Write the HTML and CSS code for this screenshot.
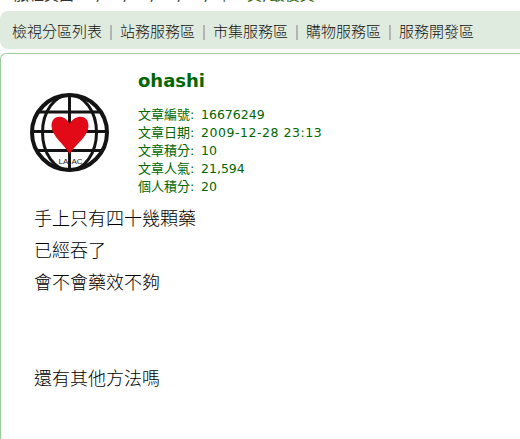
FILE: index.html
```
<!DOCTYPE html>
<html lang="zh-Hant">
<head>
    <meta charset="UTF-8">
    <title>ohashi</title>
    <link rel="stylesheet" href="styles.css">
</head>
<body>
    <div class="pager">
        <span class="pager-label">旅程頁面:</span>
        <span class="pager-pages"><span>1,</span><span>2,</span><span>3,</span><span>4,</span><span>5,</span></span>
        <a class="pager-next">下一頁</a>,
        <a class="pager-last">最後頁</a>
    </div>

    <nav class="sections">
        <a>檢視分區列表</a>
        <a>站務服務區</a>
        <a>市集服務區</a>
        <a>購物服務區</a>
        <a>服務開發區</a>
    </nav>

    <article class="post">
        <header class="post-header">
            <svg class="avatar" viewBox="0 0 80 80" width="80" height="80">
                <g fill="none" stroke="#141414" stroke-width="3">
                    <circle cx="39.500" cy="39.500" r="37.500" stroke-width="4"/>
                    <ellipse cx="39.500" cy="39.500" rx="27" ry="37.500"/>
                    <path d="M39.500 2v76M9 19h61M2 38.500h75M8 57.500h63"/>
                </g>
                <path class="heart" d="M39.500 61C35 52 21.500 43 21.500 33C21.500 21 35 21 39.500 31C45 21 58.500 21 58.500 33C58.500 43 45 52 39.500 61Z"/>
                <text class="avatar-text" x="28.500" y="71">LA</text>
                <text class="avatar-text" x="41.500" y="71">AC</text>
            </svg>
            <div class="post-info">
                <h1>ohashi</h1>
                <dl>
                    <div><dt>文章編號:</dt><dd>16676249</dd></div>
                    <div><dt>文章日期:</dt><dd class="date">2009-12-28 23:13</dd></div>
                    <div><dt>文章積分:</dt><dd>10</dd></div>
                    <div><dt>文章人氣:</dt><dd>21,594</dd></div>
                    <div><dt>個人積分:</dt><dd>20</dd></div>
                </dl>
            </div>
        </header>
        <div class="post-body">
            手上只有四十幾顆藥<br>
            已經吞了<br>
            會不會藥效不夠<br>
            <br>
            <br>
            還有其他方法嗎
        </div>
    </article>
</body>
</html>
```

FILE: styles.css
```
* {
    box-sizing: border-box;
}
body {
    margin: 0;
    height: 439px;
    overflow: hidden;
    background: #fff;
    color: #333;
    font-family: "DejaVu Sans", "Noto Sans CJK TC", sans-serif;
    font-weight: 400;
}
.pager {
    display: flex;
    align-items: center;
    height: 20px;
    margin-top: -15px;
    padding-left: 14px;
    font-size: 15px;
    line-height: 20px;
    white-space: nowrap;
}
.pager-label {
    width: 72px;
}
.pager-pages span {
    display: inline-block;
    width: 27px;
}
.pager-next,
.pager-last {
    color: #360;
}
.pager-next {
    margin-left: -4px;
}
.pager-last {
    margin-left: 3px;
}
.sections {
    display: flex;
    align-items: center;
    height: 38px;
    margin-top: 6px;
    padding-left: 12px;
    padding-top: 4px;
    background: #e0ebdf;
    border-radius: 8px 0 0 8px;
    color: #111;
    font-size: 15px;
    font-weight: 300;
    line-height: 20px;
    white-space: nowrap;
}
.sections a + a::before {
    content: "";
    display: inline-block;
    width: 2px;
    height: 15px;
    margin: 0 8px;
    background: #b4b4b4;
    vertical-align: -3px;
}
.post {
    height: 400px;
    margin-top: 4px;
    padding-left: 28px;
    border: 1px solid #99cc99;
    border-right: 0;
    border-radius: 6px 0 0 0;
}
.post-header {
    display: flex;
    height: 149px;
}
.avatar {
    flex: none;
    margin: 39px 28px 0 1px;
}
.heart {
    fill: #e20a17;
}
.avatar-text {
    fill: #222;
    font: 8px "Liberation Sans", sans-serif;
}
.post-info {
    color: #060;
}
.post-info h1 {
    margin: 16px 0 14px;
    font-size: 18px;
    font-weight: 700;
    line-height: 22px;
}
.post-info dl {
    margin: 0;
    font-size: 13px;
    line-height: 18px;
}
.post-info dl div {
    display: flex;
    height: 18px;
}
.post-info dt {
    width: 63px;
}
.post-info dd {
    margin: 0;
    font-size: 12.500px;
}
.post-info .date {
    letter-spacing: .53px;
}
.post-body {
    padding-left: 5px;
    color: #000;
    font-size: 18px;
    font-weight: 300;
    line-height: 32px;
}
```
